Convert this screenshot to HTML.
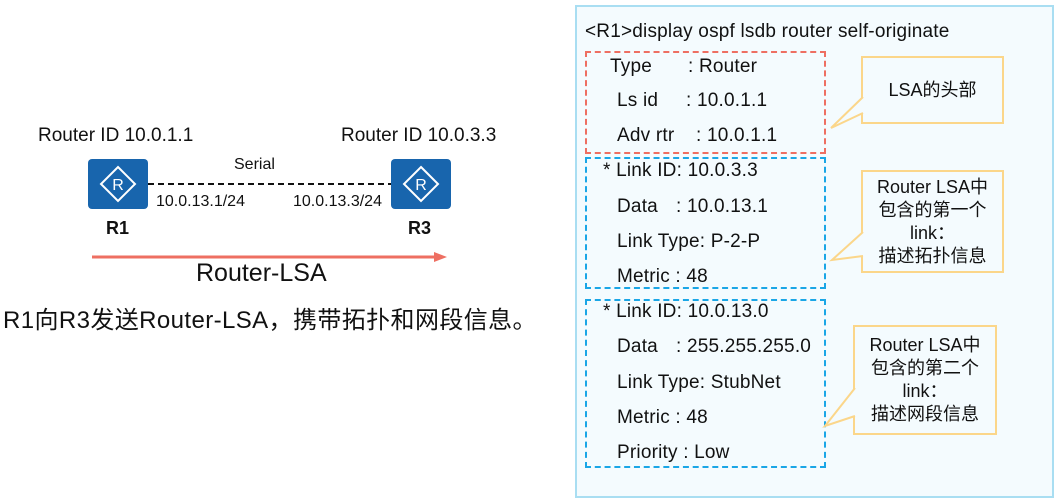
<!DOCTYPE html>
<html><head><meta charset="utf-8"><style>
*{margin:0;padding:0;box-sizing:border-box}
body{width:1059px;height:503px;background:#fff;position:relative;overflow:hidden;font-family:"Liberation Sans","Noto Sans CJK SC",sans-serif;color:#111}
.t{position:absolute;white-space:nowrap;line-height:1}
.c{font-size:19px;letter-spacing:0.2px}
.box{position:absolute}
.call{position:absolute;background:#f4fbfe;border:2px solid #fbd68a;font-size:18px;text-align:center;line-height:23px;display:flex;flex-direction:column;justify-content:center}
</style></head><body>
<div class="t" style="left:38px;top:126px;font-size:19px">Router ID 10.0.1.1</div>
<div class="t" style="left:341px;top:126px;font-size:19px">Router ID 10.0.3.3</div>
<div class="t" style="left:234px;top:157px;font-size:16px">Serial</div>
<div class="t" style="left:156px;top:194px;font-size:16px">10.0.13.1/24</div>
<div class="t" style="left:293px;top:194px;font-size:16px">10.0.13.3/24</div>
<div class="t" style="left:106px;top:219px;font-size:18px;font-weight:bold">R1</div>
<div class="t" style="left:408px;top:219px;font-size:18px;font-weight:bold">R3</div>
<svg style="position:absolute;left:0;top:0" width="560" height="300">
<line x1="148" y1="184" x2="391" y2="184" stroke="#111" stroke-width="2" stroke-dasharray="6,4"/>
<g transform="translate(88,159)"><rect width="60" height="50" rx="4" fill="#1865ad"/><path d="M30 8 L47 25 L30 42 L13 25Z" fill="none" stroke="#fff" stroke-width="2"/><text x="30" y="31" font-size="16" fill="#fff" text-anchor="middle" font-family="Liberation Sans">R</text></g>
<g transform="translate(391,159)"><rect width="60" height="50" rx="4" fill="#1865ad"/><path d="M30 8 L47 25 L30 42 L13 25Z" fill="none" stroke="#fff" stroke-width="2"/><text x="30" y="31" font-size="16" fill="#fff" text-anchor="middle" font-family="Liberation Sans">R</text></g>
<line x1="92" y1="257" x2="436" y2="257" stroke="#ee6f62" stroke-width="3"/>
<path d="M434 252 L447 257 L434 262Z" fill="#ee6f62"/>
</svg>
<div class="t" style="left:196px;top:261px;font-size:25px">Router-LSA</div>
<div class="t" style="left:3px;top:309px;font-size:24px;letter-spacing:0.4px">R1向R3发送Router-LSA，携带拓扑和网段信息。</div>

<div class="box" style="left:575px;top:5px;width:479px;height:493px;background:#f4fbfe;border:2px solid #a9def2"></div>
<div class="box" style="left:585px;top:51px;width:241px;height:103px;border:2px dashed #ee6f62"></div>
<div class="box" style="left:585px;top:157px;width:241px;height:132px;border:2px dashed #1aa6e6"></div>
<div class="box" style="left:585px;top:299px;width:241px;height:169px;border:2px dashed #1aa6e6"></div>
<div class="t c" style="left:585px;top:22px">&lt;R1&gt;display ospf lsdb router self-originate</div>
<div class="t c" style="left:610px;top:57px">Type</div><div class="t c" style="left:688px;top:57px">: Router</div>
<div class="t c" style="left:617px;top:91px">Ls id</div><div class="t c" style="left:686px;top:91px">: 10.0.1.1</div>
<div class="t c" style="left:617px;top:126px">Adv rtr</div><div class="t c" style="left:696px;top:126px">: 10.0.1.1</div>
<div class="t c" style="left:603px;top:161px">* Link ID: 10.0.3.3</div>
<div class="t c" style="left:617px;top:197px">Data</div><div class="t c" style="left:676px;top:197px">: 10.0.13.1</div>
<div class="t c" style="left:617px;top:232px">Link Type: P-2-P</div>
<div class="t c" style="left:617px;top:267px">Metric : 48</div>
<div class="t c" style="left:603px;top:302px">* Link ID: 10.0.13.0</div>
<div class="t c" style="left:617px;top:337px">Data</div><div class="t c" style="left:676px;top:337px">: 255.255.255.0</div>
<div class="t c" style="left:617px;top:373px">Link Type: StubNet</div>
<div class="t c" style="left:617px;top:408px">Metric : 48</div>
<div class="t c" style="left:617px;top:443px">Priority : Low</div>

<div class="call" style="left:861px;top:56px;width:143px;height:68px">LSA的头部</div>
<div class="call" style="left:861px;top:170px;width:143px;height:103px">Router LSA中<br>包含的第一个<br>link：<br>描述拓扑信息</div>
<div class="call" style="left:853px;top:325px;width:144px;height:110px">Router LSA中<br>包含的第二个<br>link：<br>描述网段信息</div>
<svg style="position:absolute;left:0;top:0" width="1059" height="503">
<path d="M863 97 L831 128 L863 113" fill="#f4fbfe" stroke="#fbd68a" stroke-width="2"/>
<path d="M863 232 L832 260 L863 256" fill="#f4fbfe" stroke="#fbd68a" stroke-width="2"/>
<path d="M855 388 L825 426 L855 416" fill="#f4fbfe" stroke="#fbd68a" stroke-width="2"/>
</svg>
</body></html>
